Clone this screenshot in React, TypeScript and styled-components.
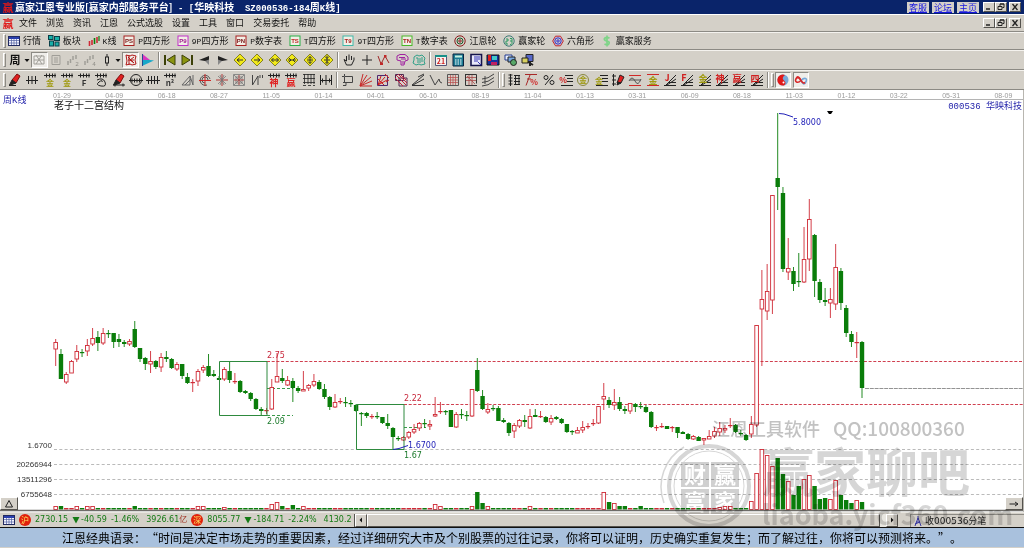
import React from "react";
import styled, { createGlobalStyle, css } from "styled-components";

const GlobalStyle = createGlobalStyle`
  * { box-sizing: border-box; }
  body { margin: 0; background: #d4d0c8; font-family: "Noto Sans CJK SC", sans-serif; }
`;

const cjk = `"Noto Sans CJK SC", sans-serif`;
const verdana = `"DejaVu Sans", "Noto Sans CJK SC", sans-serif`;
const mono = `"Liberation Mono", "Noto Sans CJK SC", monospace`;

const RED = "#cf2a36";
const GREEN = "#0a7d0a";
const OLIVE = "#a09a10";

/* ---------- window frame ---------- */

const Window = styled.div`
  display: flex;
  flex-direction: column;
  width: 100%;
`;

const TitleBar = styled.header`
  display: flex;
  align-items: center;
  height: 14px;
  padding: 0 3px 0 2px;
  background: #0a246a;
  color: #fff;
`;

const Title = styled.h1`
  margin: 0 auto 0 1px;
  padding-top: 1px;
  font: bold 10px/13px ${cjk};
  white-space: pre;
`;

const TitleLatin = styled.span`
  font: bold 9px/13px ${mono};
`;

const TitleLinks = styled.nav`
  display: flex;
  gap: 3px;
  margin-right: 4px;
`;

const TitleLink = styled.a`
  width: 22px;
  background: #d4d0c8;
  color: #1616e0;
  font: 9px/11px ${cjk};
  text-align: center;
`;

const MenuBar = styled.div`
  display: flex;
  align-items: center;
  height: 18px;
  padding: 0 3px 0 2px;
  border-top: 1px solid #fff;
  border-bottom: 1px solid #8c8a84;
`;

const MenuList = styled.nav`
  display: flex;
  gap: 9px;
  margin: 0 auto 0 5px;
`;

const MenuItem = styled.button`
  padding: 0;
  border: 0;
  background: none;
  color: #111;
  font: 9px/14px ${cjk};
`;

const WindowButtons = styled.div`
  display: flex;
  & > :last-child { margin-left: 2px; }
`;

const raised = css`
  background: #d4d0c8;
  border: 1px solid;
  border-color: #fff #55534e #55534e #fff;
`;

const WindowButton = styled.button`
  ${raised}
  display: flex;
  width: 12px;
  height: 10px;
  padding: 0;
  justify-content: center;
`;

/* ---------- toolbars ---------- */

const ToolBar = styled.div<{ $tall?: boolean }>`
  display: flex;
  align-items: center;
  height: ${(p) => (p.$tall ? 20 : 18)}px;
  padding-left: 3px;
  border-top: 1px solid #f4f2ee;
  border-bottom: 1px solid #8c8a84;
`;

const Grip = styled.span`
  width: 3px;
  height: 14px;
  margin-right: 1px;
  border: 1px solid;
  border-color: #fff #8c8a84 #8c8a84 #fff;
`;

const Separator = styled.span`
  width: 2px;
  height: 16px;
  margin: 0 2px;
  border-left: 1px solid #8c8a84;
  border-right: 1px solid #fff;
`;

const LabelTools = styled.div`
  display: flex;
  justify-content: space-between;
  width: 644px;
  margin-left: 1px;
`;

const LabelTool = styled.button`
  display: flex;
  align-items: center;
  gap: 3px;
  padding: 0;
  border: 0;
  background: none;
  color: #111;
  font: 9px/14px ${cjk};
  white-space: nowrap;
`;

const Latin = styled.span`
  font: 8px/14px ${mono};
`;

const IconGroup = styled.div<{ $w: number }>`
  display: flex;
  justify-content: space-between;
  width: ${(p) => p.$w}px;
`;

const IconButton = styled.button<{ $pressed?: boolean; $w?: number }>`
  display: flex;
  align-items: center;
  justify-content: center;
  width: ${(p) => p.$w || 16}px;
  height: 16px;
  padding: 0;
  border: 1px solid transparent;
  background: none;
  ${(p) =>
    p.$pressed &&
    css`
      background: #f0eeea;
      border-color: #8c8a84 #fff #fff #8c8a84;
    `}
`;

/* ---------- chart ---------- */

const Workspace = styled.main`
  position: relative;
`;

const ChartArea = styled.section`
  position: relative;
  background: #fff;
  border-right: 1px solid #b8b6b0;
`;

const ChartSvg = styled.svg`
  display: block;
  width: 100%;
  height: auto;
`;

const CornerButton = styled.button<{ $side: "left" | "right" }>`
  ${raised}
  position: absolute;
  bottom: 2px;
  ${(p) => p.$side}: 0;
  display: flex;
  justify-content: center;
  align-items: center;
  width: 18px;
  height: 13px;
  padding: 0;
`;

const Watermark = styled.svg`
  position: absolute;
  right: 0;
  bottom: 0;
  width: 369px;
  height: 138px;
  mix-blend-mode: multiply;
  pointer-events: none;
`;

/* ---------- status ---------- */

const StatusBar = styled.footer`
  display: flex;
  align-items: center;
  height: 16px;
  border-top: 1px solid #e8e6e0;
  border-bottom: 1px solid #111;
  background: #d4d0c8;
  font: 8px/14px ${verdana};
  color: #157a15;
`;

const Quotes = styled.div`
  display: flex;
  align-items: center;
  gap: 4px;
  width: 354px;
  padding-left: 3px;
  white-space: nowrap;
`;

const Change = styled.span`
  display: flex;
  align-items: center;
  gap: 1px;
`;

const Percent = styled.span`
  padding-right: 3px;
`;

const Unit = styled.span`
  color: #a03020;
`;

const Badge = styled.span`
  width: 12px;
  height: 12px;
  flex: none;
  border-radius: 6px;
  background: #e0200c;
  color: #ffe060;
  font: 8px/12px ${cjk};
  text-align: center;
`;

const ScrollBar = styled.div`
  display: flex;
  flex: 1;
  height: 13px;
  border-left: 1px solid #55534e;
  background: #e8e6e0;
`;

const ScrollButton = styled.button`
  ${raised}
  display: flex;
  align-items: center;
  justify-content: center;
  width: 12px;
  padding: 0;
`;

const ScrollThumb = styled.div`
  ${raised}
  flex: 1;
  margin-right: 6px;
`;

const Feed = styled.div`
  display: flex;
  align-items: center;
  gap: 3px;
  width: 114px;
  height: 13px;
  margin-left: 12px;
  padding-left: 3px;
  border-left: 1px solid #8c8a84;
  border-top: 1px solid #8c8a84;
  color: #222;
  font: 9px/12px ${verdana};
`;

const QuoteStrip = styled.p`
  height: 20px;
  margin: 0;
  border-bottom: 1px solid #d4d0c8;
  background: #a9c1dd;
  color: #000;
  font: 12px/19px ${cjk};
  text-align: center;
  text-spacing-trim: space-all;
  white-space: nowrap;
`;

/* ---------- icons ---------- */

const Svg = ({ children, w = 14, h = 14 }: { children: React.ReactNode; w?: number; h?: number }) => (
  <svg width={w} height={h} viewBox={`0 0 ${w} ${h}`} overflow="visible" fill="none" stroke="#222" strokeWidth="1" aria-hidden="true">
    {children}
  </svg>
);

const Glyph = ({ x = 7, y = 13, s = 8, c, children }: { x?: number; y?: number; s?: number; c: string; children: string }) => (
  <text x={x} y={y} fontSize={s} fill={c} stroke="none" textAnchor="middle" fontWeight="bold" fontFamily={cjk}>
    {children}
  </text>
);

const Ticks = () => <path d="M1 2.500h12M3.500 .5v4M6.500 .5v4M9.500 .5v4M12 .5v4" />;
const Fan = () => <path d="M1 12.500h12M3 12L13 2M4 12L13 6M6 9.500h7" />;
const RightLines = () => <path d="M6 2.500h8M8 5.500h6M8 8.500h6M2 12.500h12" />;
const Pen = () => (
  <>
    <path d="M4 7L9 1l3 2-4 7z" fill="#e02020" stroke="#7a1010" />
    <path d="M4 7l4 3-4 1.500-2.500.5z" fill="#222" />
  </>
);

const CodeIcon = ({ text, edge, ink }: { text: string; edge: string; ink: string }) => (
  <Svg w={12} h={12}>
    <rect x="1" y="1" width="10" height="9.500" fill="#f2efe6" stroke={edge} />
    <text x="6" y="8" fontSize="6" fill={ink} stroke="none" textAnchor="middle" fontWeight="bold" fontFamily="Liberation Sans Narrow, Liberation Sans, sans-serif">
      {text}
    </text>
  </Svg>
);

const TableIcon = () => (
  <Svg w={12} h={12}>
    <rect x=".5" y="1.500" width="11" height="9" fill="#f4f4ff" stroke="#222a60" />
    <path d="M1 3h10" stroke="#2a3fae" strokeWidth="2" />
    <path d="M1 5.500h10M1 8h10M3.500 4v6M6 4v6M8.500 4v6" stroke="#5060a0" strokeWidth=".7" />
  </Svg>
);

const BlocksIcon = () => (
  <Svg w={12} h={12}>
    <g fill="#18b0a8" stroke="#0a3f48">
      <rect x=".5" y=".5" width="4.500" height="4" />
      <rect x="6.500" y="1.500" width="5" height="4" />
      <rect x="1.500" y="6" width="4" height="5" />
      <rect x="7" y="7" width="4" height="4" />
    </g>
  </Svg>
);

const CandlesIcon = () => (
  <Svg w={12} h={12}>
    <path d="M1.500 6v5M4 5v5" stroke={RED} strokeWidth="1.600" />
    <path d="M6.500 3v6" stroke={GREEN} strokeWidth="1.600" />
    <path d="M9 2v6" stroke={RED} strokeWidth="1.600" />
    <path d="M11 1v5" stroke={GREEN} strokeWidth="1.200" />
  </Svg>
);

const TargetIcon = () => (
  <Svg w={12} h={12}>
    <circle cx="6" cy="6" r="5.200" stroke="#8a1c1c" />
    <circle cx="6" cy="6" r="3" stroke="#1c5a2a" />
    <circle cx="6" cy="6" r="1.200" stroke="#8a1c1c" />
  </Svg>
);

const WheelIcon = () => (
  <Svg w={12} h={12}>
    <circle cx="6" cy="6" r="5.200" stroke="#3f7a78" />
    <path d="M3 4h2v2H3v3h2M7 3.500h2v5q0 1-2 1M7 6h2" stroke="#2c9a60" />
  </Svg>
);

const HexIcon = () => (
  <Svg w={12} h={12}>
    <path d="M3.500 1.200h5L11.300 6l-2.800 4.800h-5L.7 6z" stroke="#c02030" />
    <circle cx="6" cy="6" r="3.200" stroke="#2a2ad0" />
    <circle cx="6" cy="6" r="1.200" stroke="#2a2ad0" />
  </Svg>
);

const DollarIcon = () => (
  <Svg w={12} h={12}>
    <path d="M8.500 3.200Q6 1.500 4 3T5.500 6Q9 6.500 8 8.700T3.500 9M6 .5v11" stroke="#7fd488" strokeWidth="1.700" />
  </Svg>
);

const Down = () => (
  <Svg w={6} h={14}>
    <path d="M.5 6h5L3 9z" fill="#111" stroke="none" />
  </Svg>
);

const Diamond = ({ d }: { d: string }) => (
  <Svg>
    <path d="M7 1l6 6-6 6-6-6z" fill="#f2ea18" stroke="#6c6810" strokeWidth=".8" />
    <path d={d} stroke="#333" />
  </Svg>
);

const GrayBars = ({ n }: { n: string }) => (
  <Svg>
    <path d="M2 8v4M4.500 6v4M7 3v4M10 2v4" stroke="#a09e98" strokeWidth="1.500" />
    <text x="11" y="13" fontSize="6" fill="#908e88" stroke="none" textAnchor="middle" fontFamily={mono}>{n}</text>
  </Svg>
);

const viewIcons: [string, React.ReactNode, boolean?, number?][] = [
  ["周期", <Svg><Glyph y={11} s={11} c="#111">周</Glyph></Svg>],
  ["选择周期", <Down />, false, 6],
  ["主图", <Svg><path d="M2 3h10v8H2zM4 2l6 9M10 2L4 11M2 7h10" stroke="#a09e98" /></Svg>, true, 17],
  ["说明", <Svg><path d="M3 2.500h8v9H3zM5 5h4M5 7h4M5 9h4" stroke="#a09e98" /></Svg>],
  ["二图", <GrayBars n="2" />],
  ["四图", <GrayBars n="4" />],
  ["K线样式", <Svg><path d="M7 1v12" /><rect x="5.500" y="4" width="3" height="6" fill="#d4d0c8" stroke="#222" /></Svg>],
  ["选择样式", <Down />, false, 6],
  ["宫格", <Svg><path d="M2 2l4 1 2-1 4 1-1 4 1 4-4 1-2-1-4 1 1-4zM4 4l6 6M10 4l-4 3 4 3M4 7h6M5 2v10" stroke="#b01818" /></Svg>, true, 17],
  ["旗帜", <Svg><path d="M2 1.500l7 5.500H2z" fill="#d838c0" stroke="none" /><path d="M2 7h7l4 .500L2 12.500z" fill="#18a8c8" stroke="none" /><path d="M1.500 1v12" stroke="#284890" /></Svg>],
];

const moveIcons: [string, React.ReactNode][] = [
  ["最前", <Svg><path d="M2 2v10" strokeWidth="2" stroke="#3c4008" /><path d="M12 2v10L4 7z" fill="#8a9410" stroke="#3c4008" /></Svg>],
  ["最后", <Svg><path d="M12 2v10" strokeWidth="2" stroke="#3c4008" /><path d="M2 2v10l8-5z" fill="#8a9410" stroke="#3c4008" /></Svg>],
  ["后退", <Svg><path d="M11 3v9L7 8z" fill="#888" stroke="none" /><path d="M1 7l10-4v3.500L7 8z" fill="#222" stroke="none" /></Svg>],
  ["前进", <Svg><path d="M3 3v9l4-4z" fill="#888" stroke="none" /><path d="M13 7L3 3v3.500L7 8z" fill="#222" stroke="none" /></Svg>],
  ["左移", <Diamond d="M4 7h6M6.500 5L4 7l2.500 2" />],
  ["右移", <Diamond d="M4 7h6M7.500 5L10 7 7.500 9" />],
  ["拉宽", <Diamond d="M3.500 7h7M5.500 5l-2 2 2 2M8.500 5l2 2-2 2" />],
  ["压窄", <Diamond d="M3 7h8M4 5l2 2-2 2M10 5L8 7l2 2" />],
  ["拉高", <Diamond d="M7 3.500v7M4 7h6M5 5.500l2-2 2 2M5 8.500l2 2 2-2" />],
  ["压低", <Diamond d="M7 2.500v9M4 7h6M5 3.500l2 2 2-2M5 10.500l2-2 2 2" />],
];

const modeIcons: [string, React.ReactNode][] = [
  ["拖动", <Svg><path d="M4.500 8L2 6.500 4.500 12h5L12 7V4.500M4.500 8V3M7 7V1.500M9.500 7V3" /></Svg>],
  ["十字", <Svg><path d="M7 2v10M2 7h10" /></Svg>],
  ["曲线", <Svg><path d="M1 3l3 8 4-8 4 7" stroke="#a02828" /><path d="M3 9.500h3v2.500H3zM7 2h2.500v2.500H7z" fill="#c02828" stroke="none" /></Svg>],
  ["智能", <Svg><path d="M2 3l3-1.500h5L13 4v3l-3 1-1 4H6V8L2 7zM4 4.500h6M6 6h5M8 8v3" stroke="#a020a0" /></Svg>],
  ["云图", <Svg><path d="M2 4l3-2 2 1 3-1 3 3-1 3 1 3-4 1-2-1-3 1-3-2 1-3zM4 5h2v5M8 5v5M10 4v5" stroke="#30a088" /></Svg>],
];

const systemIcons: [string, React.ReactNode][] = [
  ["日历", <Svg><path d="M1.500 3h11v9.500h-11z" fill="#f4f4f0" stroke="#557" /><path d="M1 3h12" stroke="#189088" strokeWidth="2" /><Glyph y={11} s={7} c="#d02020">21</Glyph></Svg>],
  ["计算器", <Svg><path d="M2 1h10.500v12H2z" fill="#1c7c94" stroke="#0a2440" /><path d="M4 3.500h7" stroke="#c8f0e0" strokeWidth="2" /><path d="M4 7h7M4 9h7M4 11h7" stroke="#fff" strokeDasharray="1.500 1" /></Svg>],
  ["笔记", <Svg><path d="M2 1.500h10.500v11H2z" fill="#e8e8f8" stroke="#14144c" strokeWidth="1.600" /><path d="M5 4h6M5 6h6M5 8h4M9 9l3 3" stroke="#3434b4" /></Svg>],
  ["保存", <Svg><path d="M1 2h12v10H1z" fill="#1830a0" stroke="#111" /><path d="M2 2h3v6H2z" fill="#e02020" stroke="none" /><path d="M6 3h5v4H6z" fill="#40c8c8" stroke="none" /><path d="M5 9h6v3H5z" fill="#c02060" stroke="none" /></Svg>],
  ["截图", <Svg><path d="M1 2h7v5H1z" fill="#e8f0ff" stroke="#223a90" /><path d="M4 4h7v5H4z" fill="#78a8e0" stroke="#222" /><circle cx="9.500" cy="9.500" r="3" fill="#58a868" stroke="#222" /></Svg>],
  ["设备", <Svg><path d="M5 1.500h7v7H5z" fill="#5868c8" stroke="#222" /><path d="M1 5h6v5H1z" fill="#d8d060" stroke="#222" /><path d="M7 9l5 3M9 8v5" strokeWidth="2" /></Svg>],
];

const drawIcons: [string, React.ReactNode][] = [
  ["画笔", <Svg><Pen /><path d="M1 12.500h7" /></Svg>],
  ["分割", <Svg><path d="M1 7.500h12M3.500 3v8M7 3v8M10.500 3v8" /></Svg>],
  ["黄金一", <Svg><Ticks /><Glyph c={OLIVE}>金</Glyph></Svg>],
  ["黄金二", <Svg><Ticks /><Glyph c={OLIVE}>金</Glyph></Svg>],
  ["斐波", <Svg><Ticks /><Glyph c="#333">F</Glyph></Svg>],
  ["螺旋", <Svg><Ticks /><path d="M3 7q6-3 8 2t-4 4-2-4 3 0" /></Svg>],
  ["量尺", <Svg><Pen /><path d="M1 12h12M3 10.500v3M11 10.500v3" /></Svg>],
  ["圆周", <Svg><circle cx="7" cy="7" r="5.500" /><path d="M0 7.500h14M3 5.500v4M5.500 5.500v4M8 5.500v4M10.500 5.500v4" /></Svg>],
  ["等分", <Svg><path d="M0 7.500h14M2.500 3v8M5.500 3v8M8.500 3v8M11.500 3v8" /></Svg>],
  ["平方", <Svg><Ticks /><Glyph c="#333">n²</Glyph></Svg>],
  ["三角", <Svg><path d="M1 12L9 3v9zM9 3l3 9M4 12l6-6M12 2v10" stroke="#666" /></Svg>],
  ["螺旋线", <Svg><path d="M12 6A5 5 0 1 0 9 12M10 7a3 3 0 1 0-3 3" stroke="#555" /><path d="M7 1v12M1 7.500h12" stroke="#d02828" /></Svg>],
  ["星线", <Svg><path d="M7 1v12M1 7h12" stroke="#b03838" /><path d="M3 3l8 8M11 3l-8 8M5 2l4 10M9 2L5 12" stroke="#777" strokeWidth=".8" /></Svg>],
  ["方星", <Svg><path d="M1.500 1.500h11v11h-11zM2 2l10 10M12 2L2 12M4 4h6v6H4z" stroke="#777" strokeWidth=".8" /><path d="M7 2v10M2 7h10" stroke="#a84848" /></Svg>],
  ["波浪", <Svg><path d="M2.500 2v10L8 3v9M10 2v3M12.500 2v3" stroke="#444" /></Svg>],
  ["神奇", <Svg><Ticks /><Glyph s={9} c="#e02020">神</Glyph></Svg>],
  ["赢家", <Svg><Ticks /><Glyph s={9} c="#e02020">赢</Glyph></Svg>],
  ["阶梯", <Svg><path d="M1 1.500h12M1 5.500h12M1 9.500h12M2.500 1v10M6 1v10M9 1v10M12 1v10M1 12.500h3M6 12.500h3M11 12.500h2" strokeWidth=".8" /></Svg>],
  ["间距", <Svg><path d="M1.500 2v10M7 2v10M12.500 2v10M2 7.500h10M3.500 5.500v4M10.500 5.500v4" /></Svg>],
];

const gannIcons: [string, React.ReactNode][] = [
  ["方框", <Svg><path d="M3.500 3.500h8v6h-8zM1 3.500h2M3.500 1v2M2 9.500h3v3H2" stroke="#444" /></Svg>],
  ["角度线", <Svg><path d="M1 13L4 1M1 13L8 2M1 13l11-9M1 13l12-5M1 13h12" stroke="#c82828" /></Svg>],
  ["箱线", <Svg><path d="M1.500 2.500h10v10h-10z" stroke="#502870" /><path d="M2 12L5 3M2 12l7-8M2 12l9-5M9 1l4 4M10 9l3-2M2 6l6 6" stroke="#d02020" /></Svg>],
  ["扇面", <Svg><path d="M1.500 1.500h8v6h-8zM5 5h8v8H5z" stroke="#502850" /><path d="M2 2l10 10M4 1l9 9M1 5l8 8M7 2l5 5" stroke="#c02040" /></Svg>],
  ["速阻线", <Svg><path d="M1 12.500h12M1 12L13 2M2 12l11-6M7 4l6-3" stroke="#333" /></Svg>],
  ["折线", <Svg><path d="M1 2l5 10 4-6 1 3 2 1" stroke="#444" /></Svg>],
  ["网格", <Svg><path d="M1.500 1.500h11v11h-11z" stroke="#555" /><path d="M2 4.500h10M2 7h10M2 9.500h10M4.500 2v10M7 2v10M9.500 2v10" stroke="#b84848" strokeWidth=".7" /></Svg>],
  ["方格", <Svg><path d="M1.500 1v11.500H13M1.500 1.500h11v9" stroke="#333" /><path d="M2 4.500h10M2 7.500h10M5 2v10M8 2v10M3 3l8 8" stroke="#a84848" strokeWidth=".8" /></Svg>],
  ["平行线", <Svg><path d="M1 6q6 0 12-5M1 9.500q6 0 12-5M1 13q6 0 12-5M4 3v8" stroke="#444" /></Svg>],
];

const measureIcons: [string, React.ReactNode][] = [
  ["列表", <Svg><path d="M1.500 2h4M1.500 5h4M1.500 8h4M1.500 11h4M3.500 1v12M7 2.500h6M7 5.500h6M7 8.500h6M7 11.500h6M8.500 2v10M12 2v10" /></Svg>],
  ["回撤", <Svg><path d="M1 1.500h12M2 12.500L6 2M3 6h4" stroke="#a82828" /><Glyph x={10} y={12} s={8} c="#d02828">%</Glyph></Svg>],
  ["百分比", <Svg><circle cx="4" cy="4.500" r="2" /><circle cx="10" cy="9.500" r="2" /><path d="M11 2L3 12" /></Svg>],
  ["百分线", <Svg><RightLines /><Glyph x={4} y={10} s={8} c="#d02020">%</Glyph></Svg>],
  ["金圆", <Svg><circle cx="7" cy="7" r="5.500" stroke="#8a8840" /><Glyph y={10} s={8} c={OLIVE}>金</Glyph></Svg>],
  ["金线", <Svg><RightLines /><Glyph x={5} y={11} s={8} c={OLIVE}>金</Glyph></Svg>],
  ["标尺笔", <Svg><path d="M2.500 1v12M1 3h4M1 7h4M1 11h4" /><path d="M6 10l3-8 4 2-3 6z" fill="#e02020" stroke="#222" /><path d="M6 12l4-2-3-1z" fill="#222" /></Svg>],
  ["通道", <Svg><path d="M1 2.500h12M1 12.500h12" stroke="#d02828" /><path d="M1 8q3-6 6 0t6-2M2 7h11" stroke="#555" /></Svg>],
  ["金道", <Svg><path d="M1 1.500h12M1 12.500h12" stroke="#d02828" /><Glyph y={11} s={9} c={OLIVE}>金</Glyph></Svg>],
  ["J扇", <Svg><Fan /><Glyph x={4} y={8} s={9} c="#d02020">J</Glyph></Svg>],
  ["F扇", <Svg><Fan /><Glyph x={4} y={8} s={9} c="#d02020">F</Glyph></Svg>],
  ["金扇", <Svg><Fan /><Glyph x={5} y={9} s={9} c={OLIVE}>金</Glyph></Svg>],
  ["神扇", <Svg><Fan /><Glyph x={5} y={9} s={9} c="#d02020">神</Glyph></Svg>],
  ["赢扇", <Svg><Fan /><Glyph x={5} y={9} s={9} c="#d02020">赢</Glyph></Svg>],
  ["四扇", <Svg><Fan /><Glyph x={5} y={9} s={9} c="#d02020">四</Glyph></Svg>],
];

const Icons = ({ items, w }: { items: [string, React.ReactNode][]; w: number }) => (
  <IconGroup $w={w}>
    {items.map(([name, icon]) => (
      <IconButton key={name} aria-label={name}>{icon}</IconButton>
    ))}
  </IconGroup>
);

const Controls = () => (
  <WindowButtons>
    <WindowButton aria-label="最小化"><Svg w={8} h={8}><path d="M1 6h4" strokeWidth="1.500" /></Svg></WindowButton>
    <WindowButton aria-label="还原"><Svg w={8} h={8}><path d="M3 3V1h4v3.500H5.500M1 3.500h4v3H1zM1 3.500h4M3 1h4" /></Svg></WindowButton>
    <WindowButton aria-label="关闭"><Svg w={8} h={8}><path d="M1.500 1l5 6M6.500 1l-5 6" strokeWidth="1.300" /></Svg></WindowButton>
  </WindowButtons>
);

const BrandMark = () => (
  <Svg w={12} h={12}>
    <text x="6" y="10.500" fontSize="11" fill="#e01818" stroke="none" textAnchor="middle" fontWeight="bold" fontFamily={cjk}>赢</text>
  </Svg>
);

const Fall = ({ children }: { children: string }) => (
  <Change>
    <Svg w={8} h={8}><path d="M.5 1h7L4 7.500z" fill="#157a15" stroke="none" /></Svg>
    {children}
  </Change>
);

/* ---------- data ---------- */

const menus = ["文件", "浏览", "资讯", "江恩", "公式选股", "设置", "工具", "窗口", "交易委托", "帮助"];

const labelTools: { icon: React.ReactNode; latin?: string; text: string }[] = [
  { icon: <TableIcon />, text: "行情" },
  { icon: <BlocksIcon />, text: "板块" },
  { icon: <CandlesIcon />, latin: "K", text: "线" },
  { icon: <CodeIcon text="PS" edge="#a82020" ink="#7a1818" />, latin: "P", text: "四方形" },
  { icon: <CodeIcon text="P9" edge="#c030c8" ink="#a01890" />, latin: "9P", text: "四方形" },
  { icon: <CodeIcon text="PN" edge="#a82020" ink="#7a1818" />, latin: "P", text: "数字表" },
  { icon: <CodeIcon text="TS" edge="#28b048" ink="#c02828" />, latin: "T", text: "四方形" },
  { icon: <CodeIcon text="T9" edge="#40b8a8" ink="#a82020" />, latin: "9T", text: "四方形" },
  { icon: <CodeIcon text="TN" edge="#48b828" ink="#a82020" />, latin: "T", text: "数字表" },
  { icon: <TargetIcon />, text: "江恩轮" },
  { icon: <WheelIcon />, text: "赢家轮" },
  { icon: <HexIcon />, text: "六角形" },
  { icon: <DollarIcon />, text: "赢家服务" },
];

const dates = ["01-29", "04-09", "06-18", "08-27", "11-05", "01-14", "04-01", "06-10", "08-19", "11-04", "01-13", "03-31", "06-09", "08-18", "11-03", "01-12", "03-22", "05-31", "08-09"];

/* one entry per week: direction, high, body top, body bottom, low (chart rows) */
const weeks = `r339,342,349,366 g349,354,379,379 r372,374,382,384 r360,361,373,373 r345,351,359,362 g349,352,353,357 r339,345,351,356 r328,338,344,346
g331,337,343,351 r328,333,343,345 g330,333,334,338 g333,333,342,348 g334,339,342,347 g340,342,344,347 r339,341,344,346 g321,329,347,348
g348,348,359,362 g357,358,364,370 r351,361,364,373 g360,361,367,369 r353,357,367,372 g351,357,359,362 g358,359,368,369 r362,364,369,371
g364,364,376,379 g373,377,383,384 r379,382,383,392 r369,371,381,386 r365,367,370,373 g354,366,376,377 g370,374,376,377 g376,378,380,380
r367,369,379,381 g362,371,380,383 r373,381,382,384 g380,381,392,393 g390,391,393,394 g392,393,399,401 g398,399,409,410 g407,409,411,415
r408,410,411,414 r379,387,409,410 r353,376,382,382 g369,378,381,383 r376,380,385,386 g378,381,388,402 g386,388,391,393 r371,389,391,391
r384,385,388,391 r374,381,385,387 g380,382,389,390 g384,389,397,399 g396,397,407,410 r394,402,407,408 r398,401,402,404 g397,402,403,407
g400,403,404,407 g404,405,411,412 g412,413,414,426 g412,413,416,418 r414,416,417,419 g412,416,417,419 g417,417,423,424 g414,423,426,429
g427,428,437,449 g436,438,439,441 r436,437,440,441 r431,432,437,439 r424,429,432,434 r422,423,428,431 g419,423,424,428 r420,424,426,430
r397,414,416,417 r402,411,412,414 g410,411,412,415 g410,410,427,427 r412,414,427,428 g409,414,415,419 g411,415,416,421 r389,389,416,417
g358,370,391,392 g390,396,409,410 r403,409,412,414 g405,408,409,411 g406,408,421,421 g418,420,422,423 g422,423,433,436 r423,425,431,438
r419,420,426,428 g415,420,422,427 r409,416,428,429 g409,415,417,417 r411,416,417,418 g416,417,422,423 r415,418,422,425 g416,417,419,420
g418,419,423,424 g424,424,432,433 g430,431,432,435 r427,430,433,433 r421,427,430,433 r423,426,427,429 r419,423,424,426 r406,406,423,424
r383,396,399,410 g397,400,405,408 r389,402,405,410 g397,402,409,411 g406,409,411,414 r403,403,411,414 g403,404,407,412 g402,406,407,409
g405,407,412,413 g411,412,427,428 r425,427,428,431 r423,426,427,428 g426,426,429,429 r426,427,428,432 g427,427,433,438 g431,432,434,434
g433,434,439,440 r435,436,439,440 g436,437,441,441 r438,438,440,445 r430,436,439,439 r427,431,436,438 r422,428,432,436 r425,428,430,433
r418,425,426,428 g424,425,432,433 g430,433,434,436 g434,435,440,441 r416,424,434,438 r325,325,425,427 r270,299,309,366 r264,291,311,320
r195,195,300,314 g113,178,187,210 g187,193,269,272 r238,268,272,280 g267,271,284,291 g253,281,282,287 r227,259,282,283 r199,219,259,271
g234,235,281,297 g279,282,300,303 g288,300,302,306 r288,299,303,318 r244,267,304,310 g268,271,303,310 g305,308,333,337 g331,334,342,347
r332,342,343,358 g341,342,388,398`
  .split(/\s+/)
  .map((s) => {
    const [high, top, bottom, low] = s.slice(1).split(",").map(Number);
    return { color: s[0] === "r" ? RED : GREEN, high, top, bottom, low };
  });

/* top of the volume bar for the weeks that rise above the base level */
const volumeTops: Record<number, number> = {
  0: 506, 1: 506, 4: 506, 6: 506, 7: 506, 15: 506, 27: 506, 28: 506, 32: 507,
  41: 504, 42: 502, 43: 506, 45: 505, 47: 506, 72: 504, 73: 506, 79: 506, 80: 492, 81: 503, 82: 506,
  90: 506, 104: 492, 105: 502, 106: 503, 107: 506, 108: 506, 111: 506, 126: 507, 127: 506, 128: 506,
  132: 501, 133: 473, 134: 449, 135: 455, 136: 466, 137: 458, 138: 474, 139: 481, 140: 495, 141: 486,
  142: 479, 143: 475, 144: 486, 145: 499, 146: 498, 147: 499, 148: 480, 149: 495, 150: 500, 151: 503,
  152: 500, 153: 502,
};

const FIRST = 55.7;
const PITCH = 5.27;

const Bar = ({ x, top, bottom, color }: { x: number; top: number; bottom: number; color: string }) =>
  color === RED && bottom - top > 1.5 ? (
    <rect x={x - 1.8} y={top + 0.5} width={3.6} height={bottom - top - 0.5} fill="#fff" stroke={color} strokeWidth=".9" />
  ) : (
    <rect x={x - 2.2} y={top} width={4.4} height={Math.max(1.2, bottom - top)} fill={color} />
  );

const Candles = () => (
  <g>
    {weeks.map((w, i) => {
      const x = FIRST + PITCH * i;
      return (
        <g key={i}>
          <path d={`M${x} ${w.high}V${w.low}`} stroke={w.color} strokeWidth=".9" />
          <Bar x={x} top={w.top} bottom={w.bottom} color={w.color} />
          <Bar x={x} top={volumeTops[i] || 508} bottom={509.5} color={w.color} />
        </g>
      );
    })}
  </g>
);

const Chart = () => (
  <ChartSvg viewBox="0 90 1023 422" role="img" aria-label="华映科技周K线图">
    <path d="M54 99.5H1023" stroke="#b4b4b4" />
    <g fontSize="7" fontFamily="Liberation Sans Narrow, Liberation Sans, sans-serif" fill="#9a9a9a" textAnchor="middle">
      {dates.map((d, i) => <text key={i} x={62 + 52.3 * i} y="98">{d}</text>)}
    </g>
    <g stroke="#a8a8a8" strokeDasharray="3 2.300" strokeWidth=".8">
      <path d="M54 449.500H1023M54 464.500H1023M54 479.500H1023M54 494.500H1023" />
    </g>
    <g fontSize="8" fontFamily="Liberation Sans, sans-serif" fill="#333" textAnchor="end">
      <text x="52" y="448">1.6700</text>
      <text x="52" y="467">20266944</text>
      <text x="52" y="482">13511296</text>
      <text x="52" y="497">6755648</text>
    </g>
    <path d="M267 361.500H1023M404 404.500H1023" stroke="#d04050" strokeDasharray="3 1.700" />
    <path d="M865 388.500H1023" stroke="#777" strokeDasharray="4 .8" strokeWidth=".8" />
    <path d="M267 388.500H293M267 415.500H293M404 427.500H426" stroke="#3a9a4a" strokeDasharray="3 2" />
    <Candles />
    <path d="M219.500 361.500h47.500v54h-47.500zM356.500 404.500h47.500v45h-47.500z" fill="none" stroke="#2e8a3e" />
    <path d="M779 113.500l5 .500 9 3M393 449.500l6-1 9-3" fill="none" stroke="#2222b8" />
    <path d="M827 111h6l-2 3h-2z" fill="#000" />
    <g fontSize="8" fontFamily={verdana}>
      <text x="267" y="358" fill="#c8283c">2.75</text>
      <text x="404" y="401" fill="#c8283c">2.22</text>
      <text x="267" y="424" fill="#1c7a2c">2.09</text>
      <text x="404" y="458" fill="#1c7a2c">1.67</text>
      <text x="408" y="448" fill="#2222b8">1.6700</text>
      <text x="793" y="125" fill="#2222b8">5.8000</text>
    </g>
    <g fontSize="9" fontFamily={mono} fill="#1c1ca8">
      <text x="3" y="103">周K线</text>
      <text x="1022" y="109" textAnchor="end">000536 华映科技</text>
    </g>
    <text x="54" y="109" fontSize="10" fontFamily={cjk} fill="#111">老子十二宫结构</text>
    <path d="M0 510.500H1023" stroke="#6e6c68" strokeWidth="1.500" />
  </ChartSvg>
);

const App = () => (
  <Window>
    <GlobalStyle />
    <TitleBar>
      <BrandMark />
      <Title>
        赢家江恩专业版[赢家内部服务平台]<TitleLatin> - [</TitleLatin>华映科技<TitleLatin>{"  SZ000536-184"}</TitleLatin>周<TitleLatin>K</TitleLatin>线<TitleLatin>]</TitleLatin>
      </Title>
      <TitleLinks>
        <TitleLink href="#service">客服</TitleLink>
        <TitleLink href="#forum">论坛</TitleLink>
        <TitleLink href="#home">主页</TitleLink>
      </TitleLinks>
      <Controls />
    </TitleBar>
    <MenuBar>
      <BrandMark />
      <MenuList>
        {menus.map((m) => <MenuItem key={m}>{m}</MenuItem>)}
      </MenuList>
      <Controls />
    </MenuBar>
    <ToolBar>
      <Grip />
      <LabelTools>
        {labelTools.map((t, i) => (
          <LabelTool key={i}>
            {t.icon}
            <span>{t.latin && <Latin>{t.latin}</Latin>}{t.text}</span>
          </LabelTool>
        ))}
      </LabelTools>
    </ToolBar>
    <ToolBar $tall>
      <Grip />
      <IconGroup $w={149}>
        {viewIcons.map(([name, icon, pressed, w]) => (
          <IconButton key={name} aria-label={name} $pressed={pressed} $w={w}>{icon}</IconButton>
        ))}
      </IconGroup>
      <Separator />
      <Icons items={moveIcons} w={173} />
      <Separator />
      <Icons items={modeIcons} w={86} />
      <Separator />
      <Icons items={systemIcons} w={103} />
    </ToolBar>
    <ToolBar $tall>
      <Grip />
      <Icons items={drawIcons} w={327} />
      <Separator />
      <Icons items={gannIcons} w={156} />
      <Separator />
      <Grip />
      <Icons items={measureIcons} w={259} />
      <Separator />
      <Grip />
      <IconGroup $w={34}>
        <IconButton aria-label="太极" $pressed>
          <Svg>
            <circle cx="7" cy="7" r="5.500" fill="#78a8d8" stroke="none" />
            <path d="M9 2A5.500 5.500 0 1 0 8 12.400Q11 10 8 7.500T9 2z" fill="#e01818" stroke="none" />
            <circle cx="7.500" cy="9.500" r="1" fill="#fff" stroke="none" />
          </Svg>
        </IconButton>
        <IconButton aria-label="无限" $pressed>
          <Svg>
            <path d="M7 7.500Q4.500 10 2.500 9t0-4T7 7.500" stroke="#d82828" strokeWidth="1.600" />
            <path d="M7 7.500Q9.500 5 11.500 5.500t0 4T7 7.500" stroke="#78a8d8" strokeWidth="1.600" />
            <path d="M3 5q2-1 4 2.500T11 9.500" stroke="#d82828" strokeWidth="1.600" />
          </Svg>
        </IconButton>
      </IconGroup>
    </ToolBar>
    <Workspace>
      <ChartArea>
        <Chart />
        <CornerButton $side="left" aria-label="展开">
          <Svg w={12} h={10}><path d="M6 1.500L9.500 8h-7z" /></Svg>
        </CornerButton>
        <CornerButton $side="right" aria-label="向右">
          <Svg w={12} h={10}><path d="M1.500 5h8M7 3l3 2-3 2" /></Svg>
        </CornerButton>
      </ChartArea>
      <StatusBar>
        <Quotes>
          <TableIcon />
          <Badge>沪</Badge>
          <span>2730.15</span>
          <Fall>-40.59</Fall>
          <Percent>-1.46%</Percent>
          <span>3926.61<Unit>亿</Unit></span>
          <Badge>深</Badge>
          <span>8055.77</span>
          <Fall>-184.71</Fall>
          <Percent>-2.24%</Percent>
          <span>4130.2</span>
        </Quotes>
        <ScrollBar>
          <ScrollButton aria-label="向左滚动"><Svg w={6} h={8}><path d="M4 1.500v5L1.500 4z" fill="#111" stroke="none" /></Svg></ScrollButton>
          <ScrollThumb />
          <ScrollButton aria-label="向右滚动"><Svg w={6} h={8}><path d="M2 1.500v5L4.500 4z" fill="#111" stroke="none" /></Svg></ScrollButton>
        </ScrollBar>
        <Feed>
          <Svg w={8} h={12}><path d="M4 1v3M4 3L1 11M4 3l3 8M2.500 7h3M1 9l5-2" stroke="#3434a0" /></Svg>
          <span>收000536分笔</span>
        </Feed>
      </StatusBar>
      <QuoteStrip>
        江恩经典语录：“时间是决定市场走势的重要因素，经过详细研究大市及个别股票的过往记录，你将可以证明，历史确实重复发生；而了解过往，你将可以预测将来。”。
      </QuoteStrip>
      <Watermark viewBox="655 410 369 138" aria-hidden="true">
        <g fontFamily={cjk}>
          <g fill="#c2c2c2" fontWeight="500">
            <text x="712" y="436" fontSize="18">江恩工具软件</text>
            <text x="833" y="436" fontSize="19">QQ:100800360</text>
          </g>
          <text x="762" y="492" fontSize="52" fontWeight="bold" fill="#d6d6d6">赢家聊吧</text>
          <text x="762" y="525" fontSize="27" fontWeight="bold" fill="#d6d6d6">liaoba.yicf360.com</text>
          <g fill="none" stroke="#d6d6d6">
            <circle cx="709" cy="486" r="40" strokeWidth="4" />
            <circle cx="709" cy="486" r="35" strokeWidth="1" />
            <path d="M664 503A46 46 0 0 1 684 447" strokeWidth="1.500" />
          </g>
          <g fill="#d0d0d0">
            <rect x="681" y="462" width="28" height="25" />
            <rect x="711" y="462" width="28" height="25" />
            <rect x="681" y="489" width="28" height="25" />
            <rect x="711" y="489" width="28" height="25" />
          </g>
          <g fill="#fff" fontSize="22" fontWeight="bold" textAnchor="middle">
            <text x="695" y="483">财</text>
            <text x="725" y="483">赢</text>
            <text x="695" y="510">富</text>
            <text x="725" y="510">家</text>
          </g>
        </g>
      </Watermark>
    </Workspace>
  </Window>
);

export default App;
